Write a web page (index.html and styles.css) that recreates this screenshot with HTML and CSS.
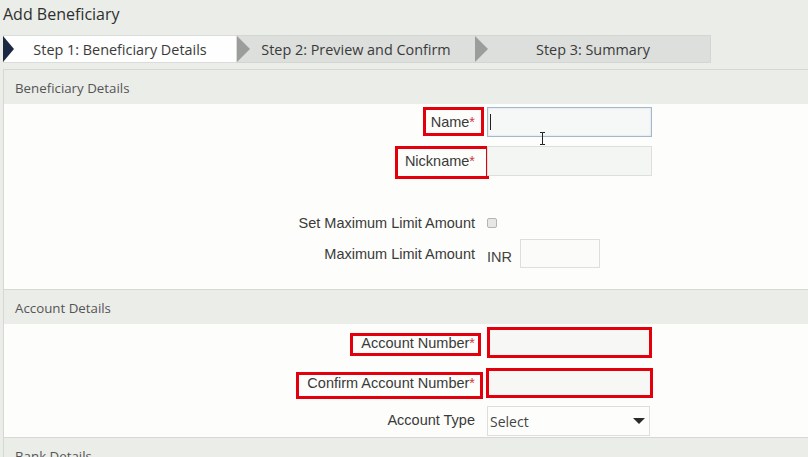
FILE: index.html
```html
<!DOCTYPE html>
<html lang="en">
<head>
<meta charset="utf-8">
<title>Add Beneficiary</title>
<link rel="stylesheet" href="styles.css">
</head>
<body>
<div class="page">
  <h1 class="title">Add Beneficiary</h1>
  <div class="steps">
    <div class="step step-1 step-active">Step 1: Beneficiary Details</div>
    <div class="step step-2">Step 2: Preview and Confirm</div>
    <div class="step step-3">Step 3: Summary</div>
  </div>

  <div class="form">
    <section class="section">
      <div class="section-head">Beneficiary Details</div>
      <div class="section-body body-beneficiary">
        <div class="row row-name">
          <div class="label"><span class="lbl hl hl-name">Name<span class="req">*</span></span></div>
          <div class="field field-focus"><span class="caret"></span>
            <svg class="ibeam" width="7" height="13" viewBox="0 0 7 13"><path d="M1 0.5h2.5M3.5 0.5h2.5M3.5 0.5v12M1 12.5h2.5M3.5 12.5h2.5" stroke="#222" stroke-width="1" fill="none"/></svg>
          </div>
        </div>
        <div class="row row-nick">
          <div class="label"><span class="lbl hl hl-nick">Nickname<span class="req">*</span></span></div>
          <div class="field"></div>
        </div>
        <div class="row row-setmax">
          <div class="label"><span class="lbl">Set Maximum Limit Amount</span></div>
          <div class="check"></div>
        </div>
        <div class="row row-max">
          <div class="label"><span class="lbl">Maximum Limit Amount</span></div>
          <div class="amount"><span class="cur">INR</span><div class="field field-small"></div></div>
        </div>
      </div>
    </section>

    <section class="section">
      <div class="section-head">Account Details</div>
      <div class="section-body body-account">
        <div class="row row-acc">
          <div class="label"><span class="lbl hl hl-acc">Account Number<span class="req">*</span></span></div>
          <div class="field field-red field-acc"></div>
        </div>
        <div class="row row-conf">
          <div class="label"><span class="lbl hl hl-conf">Confirm Account Number<span class="req">*</span></span></div>
          <div class="field field-red field-conf"></div>
        </div>
        <div class="row row-type">
          <div class="label"><span class="lbl lbl-type">Account Type</span></div>
          <div class="select"><span>Select</span><span class="tri"></span></div>
        </div>
      </div>
    </section>

    <section class="section">
      <div class="section-head">Bank Details</div>
    </section>
  </div>
</div>
</body>
</html>
```

FILE: styles.css
```css
html, body {
  margin: 0;
  padding: 0;
}
body {
  background: #ebede9;
  font-family: "Open Sans", "Liberation Sans", sans-serif;
  color: #333;
  width: 808px;
  height: 457px;
  overflow: hidden;
}
.page {
  padding-left: 3px;
}
.title {
  margin: 0;
  padding-top: 3px;
  font-size: 16px;
  line-height: 22px;
  font-weight: 400;
  color: #2f2f2f;
}
.steps {
  display: flex;
  width: 708px;
  height: 28px;
  margin-top: 10px;
  background: #dcdfdc;
  box-shadow: inset 0 0 0 1px #d3d6d3;
}
.step {
  flex: none;
  position: relative;
  display: flex;
  align-items: center;
  justify-content: center;
  box-sizing: border-box;
  padding-top: 1px;
  font-size: 14.4px;
  color: #3a3a3a;
}
.step-1 { width: 234px; }
.step-2 { width: 238px; }
.step-3 { width: 236px; }
.step-active {
  background: #fdfefd;
  border: 1px solid #d9dcd9;
}
.step::before {
  content: "";
  position: absolute;
  left: 0;
  top: 1px;
  border-left: 13px solid #9a9d9a;
  border-top: 13px solid transparent;
  border-bottom: 13px solid transparent;
}
.step-active::before {
  left: -1px;
  top: 0;
  border-left: 11px solid #1b2843;
}
.form {
  margin-top: 6px;
  border-top: 1px solid #d5d8d3;
  border-left: 1px solid #d5d8d3;
}
.section-head {
  height: 34px;
  display: flex;
  align-items: center;
  padding-left: 11px;
  padding-top: 1px;
  box-sizing: border-box;
  font-size: 13.3px;
  color: #555;
  background: #ebede9;
}
.section-body {
  background: #fdfefb;
  border-bottom: 1px solid #d5d8d3;
  box-sizing: border-box;
  padding-top: 3px;
}
.body-beneficiary {
  height: 186px;
}
.body-account {
  height: 114px;
}
.row {
  display: grid;
  grid-template-columns: 471px 165px;
  column-gap: 12px;
  align-items: center;
  font-family: "Liberation Sans", Arial, sans-serif;
  font-size: 14.5px;
  color: #3a3a3a;
}
.label {
  text-align: right;
}
.lbl {
  position: relative;
  display: inline-block;
  line-height: 16px;
}
.lbl-type {
  margin-bottom: 3px;
}
.req {
  color: #cc3a40;
}
.hl::after {
  content: "";
  position: absolute;
  border: 3px solid #e3000c;
  box-sizing: border-box;
}
.hl-name::after { top: -7px; bottom: -6px; left: -8px; right: -9px; }
.hl-nick::after { top: -7px; bottom: -10px; left: -10px; right: -14px; }
.hl-acc::after { top: -2px; bottom: -5px; left: -11px; right: -6px; }
.hl-conf::after { top: -3px; bottom: -8px; left: -11px; right: -8px; }

.row-name { height: 30px; }
.row-nick { height: 30px; margin-top: 9px; }
.row-setmax { height: 20px; margin-top: 37px; }
.row-max { height: 29px; margin-top: 6px; }
.row-acc { height: 31px; }
.row-conf { height: 30px; margin-top: 10px; }
.row-type { height: 30px; margin-top: 8px; }

.field {
  position: relative;
  height: 100%;
  background: #f4f6f3;
  border: 1px solid #dcdfdb;
  box-sizing: border-box;
}
.field-focus {
  border-color: #a3b8cc;
  background: #f6f8f7;
  box-shadow: inset 0 0 2px rgba(120, 150, 180, 0.35);
}
.caret {
  position: absolute;
  left: 2px;
  top: 6px;
  width: 1px;
  height: 16px;
  background: #222;
}
.ibeam {
  position: absolute;
  left: 51px;
  top: 24px;
}
.field-red {
  border: 3px solid #e3000c;
  background: #f7f8f6;
}
.field-conf {
  margin-left: -1px;
  width: 167px;
}
.check {
  width: 10px;
  height: 10px;
  border: 1px solid #b4b6b4;
  border-radius: 2px;
  background: #e6e7e6;
  box-sizing: border-box;
}
.amount {
  display: flex;
  align-items: center;
  height: 100%;
}
.cur {
  width: 33px;
  padding-top: 7px;
  color: #444;
}
.field-small {
  width: 80px;
  background: #fbfcfa;
}
.select {
  position: relative;
  height: 100%;
  width: 163px;
  border: 1px solid #dcdfdb;
  background: #fdfefc;
  box-sizing: border-box;
  display: flex;
  align-items: center;
  justify-content: space-between;
  padding: 0 4px 0 2px;
  font-family: "Open Sans", sans-serif;
  font-size: 14px;
  color: #444;
}
.tri {
  width: 0;
  height: 0;
  border-left: 6px solid transparent;
  border-right: 6px solid transparent;
  border-top: 6px solid #2a2a2a;
}
```
